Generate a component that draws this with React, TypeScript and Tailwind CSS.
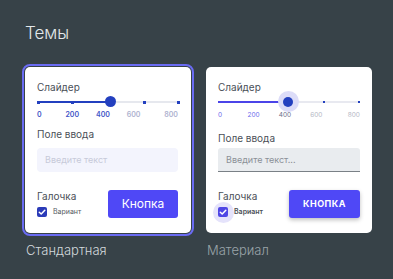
import React from "react";

const font = { fontFamily: "Inter, 'Noto Sans', sans-serif" };

function Check({ className }: { className?: string }) {
  return (
    <svg viewBox="0 0 10 10" className={className} fill="none">
      <polyline points="2.3,5.2 4.2,7 7.8,3.2" stroke="white" strokeWidth="1.5" strokeLinecap="round" strokeLinejoin="round" />
    </svg>
  );
}

function StandardCard() {
  const ticks = [0, 34, 106, 140];
  return (
    <div className="w-[166px] h-[166px] bg-white rounded-[5px] outline-2 outline-[#6a6bf2] outline-offset-1 pl-[12px] pr-[13px] pt-[13px] flex flex-col">
      <div className="text-[10px] leading-[14px] text-[#4a4f57]">Слайдер</div>
      <div className="relative h-[12px] mt-[2px]">
        <div className="absolute left-[1px] right-0 top-[5px] h-[2px] bg-[#e6e8ee]" />
        <div className="absolute left-[1px] w-[72px] top-[5px] h-[2px] bg-[#2340bf]" />
        {ticks.map((t) => (
          <div key={t} className="absolute top-[4.5px] w-[3px] h-[3px] bg-[#2340bf]" style={{ left: t }} />
        ))}
        <div className="absolute top-0 left-[68px] w-[11px] h-[11px] rounded-full bg-[#2340bf]" />
      </div>
      <div className="flex justify-between text-[7px] leading-[10px] mt-[2px] font-semibold">
        <span className="text-[#3f55c7]">0</span>
        <span className="w-0 flex justify-center text-[#3f55c7]">200</span>
        <span className="w-0 flex justify-center text-[#3f55c7]">400</span>
        <span className="w-0 flex justify-center text-[#aeb2cf]">600</span>
        <span className="text-[#aeb2cf]">800</span>
      </div>
      <div className="text-[10px] leading-[14px] text-[#4a4f57] mt-[7px]">Поле ввода</div>
      <div className="mt-[7px] h-[24px] rounded-[4px] bg-[#f3f4fd] flex items-center pl-[8px] text-[9px] text-[#c7cad9]">
        Введите текст
      </div>
      <div className="flex justify-between mt-[18px]">
        <div className="flex flex-col">
          <div className="text-[10px] leading-[14px] text-[#4a4f57] mt-[-1px]">Галочка</div>
          <div className="flex items-center mt-[4px]">
            <div className="w-[10px] h-[10px] rounded-[2px] bg-[#2b3bb8] flex items-center justify-center">
              <Check className="w-[10px] h-[10px]" />
            </div>
            <span className="ml-[6px] text-[7px] text-[#555a62]">Вариант</span>
          </div>
        </div>
        <div className="w-[70px] h-[28px] rounded-[3px] bg-[#4f48f6] flex items-center justify-center text-[12px] text-white">
          Кнопка
        </div>
      </div>
    </div>
  );
}

function MaterialCard() {
  return (
    <div className="w-[166px] h-[166px] bg-white rounded-[5px] pl-[12px] pr-[12px] pt-[13px] flex flex-col">
      <div className="text-[10px] leading-[14px] text-[#4a4f57]">Слайдер</div>
      <div className="relative h-[12px] mt-[2px]">
        <div className="absolute left-0 right-0 top-[5px] h-[2px] bg-[#e8e9f0]" />
        <div className="absolute left-0 w-[70px] top-[5px] h-[2px] bg-[#4b44e8]" />
        <div className="absolute top-[5px] left-[105px] w-[2px] h-[2px] bg-[#2340bf]" />
        <div className="absolute top-[5px] left-[140px] w-[2px] h-[2px] bg-[#2340bf]" />
        <div className="absolute top-[-5px] left-[60px] w-[21px] h-[21px] rounded-full bg-[#dcdcf8]" />
        <div className="absolute top-[1px] left-[65px] w-[10px] h-[10px] rounded-full bg-[#2340bf]" />
      </div>
      <div className="flex justify-between text-[6.5px] leading-[10px] mt-[2px]">
        <span className="text-[#6a68ec]">0</span>
        <span className="w-0 flex justify-center text-[#6a68ec]">200</span>
        <span className="w-0 flex justify-center text-[#6a6f8a]">400</span>
        <span className="w-0 flex justify-center text-[#b4b7c4]">600</span>
        <span className="text-[#b4b7c4]">800</span>
      </div>
      <div className="text-[10px] leading-[14px] text-[#4a4f57] mt-[11px]">Поле ввода</div>
      <div className="mt-[3px] h-[24px] rounded-t-[3px] bg-[#e9ecef] border-b border-[#7a8086] flex items-center pl-[8px] text-[9px] text-[#8b9097]">
        Введите текст...
      </div>
      <div className="flex justify-between mt-[18px]">
        <div className="flex flex-col">
          <div className="text-[10px] leading-[14px] text-[#4a4f57] mt-[-1px]">Галочка</div>
          <div className="flex items-center mt-[4px] relative">
            <div className="relative w-[10px] h-[10px] flex items-center justify-center">
              <div className="absolute w-[21px] h-[21px] rounded-full bg-[#e5e3fb]" />
              <div className="relative w-[10px] h-[10px] rounded-[2px] bg-[#4f46e5] flex items-center justify-center">
                <Check className="w-[10px] h-[10px]" />
              </div>
            </div>
            <span className="relative ml-[6px] text-[7px] font-semibold text-[#4a4f57]">Вариант</span>
          </div>
        </div>
        <div className="w-[71px] h-[28px] rounded-[3px] bg-[#4f48f6] shadow-[0_2px_4px_rgba(0,0,0,0.25)] flex items-center justify-center text-[9px] font-bold tracking-[0.5px] text-white">
          КНОПКА
        </div>
      </div>
    </div>
  );
}

export default function App() {
  return (
    <div className="w-[393px] h-[279px] bg-[#374248] pl-[25px] pt-[23px]" style={font}>
      <div className="text-[17px] leading-[20px] font-light text-[#e3e8ea]">Темы</div>
      <div className="flex gap-[15px] mt-[24px]">
        <div className="flex flex-col">
          <StandardCard />
          <div className="mt-[9px] text-[13px] leading-[16px] font-light text-[#d3d9dc] pl-[1px]">Стандартная</div>
        </div>
        <div className="flex flex-col">
          <MaterialCard />
          <div className="mt-[9px] text-[13px] leading-[16px] font-light text-[#9aa4a9] pl-[1px]">Материал</div>
        </div>
      </div>
    </div>
  );
}
